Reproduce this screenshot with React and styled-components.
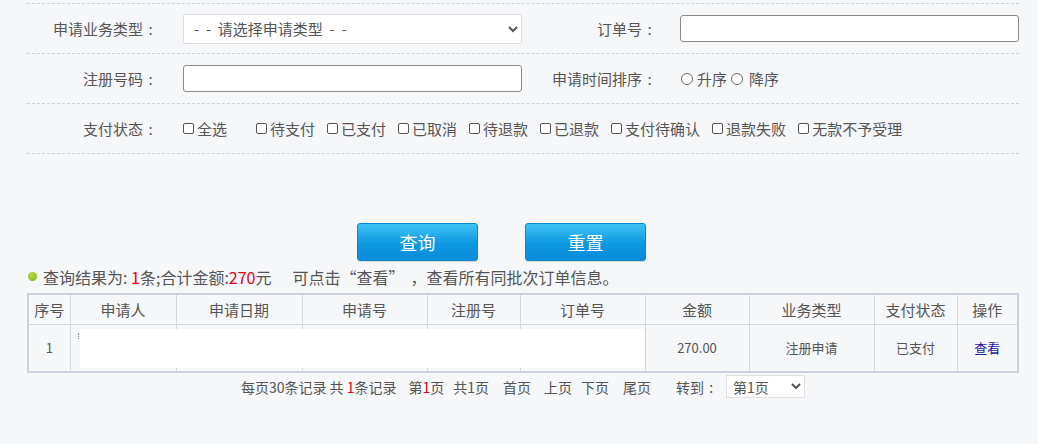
import React from "react";
import styled, { createGlobalStyle } from "styled-components";

const Global = createGlobalStyle`
  html, body { margin: 0; padding: 0; background: #f6f7f9; }
  body { font-family: "Noto Sans CJK SC", "Noto Sans", sans-serif; color: #555; }
  * { box-sizing: border-box; }
`;

const Page = styled.div`
  width: 1038px;
  padding: 3px 19px 0 27px;
`;

const Form = styled.div`
  border-top: 1px dashed #cfd1d6;
`;

const Row = styled.div`
  display: grid;
  grid-template-columns: 156px 339px 158px 339px;
  height: 50px;
  align-items: center;
  border-bottom: 1px dashed #cfd1d6;
`;

const Label = styled.div`
  text-align: right;
  padding-right: ${(p) => p.$pr || 25}px;
  font-size: 15px;
  color: #555;
  white-space: nowrap;
`;

const Colon = styled.span`
  display: inline-block;
  width: 1em;
  text-align: center;
`;

const Select = styled.select`
  width: 339px;
  height: 30px;
  border: 1px solid #dcdde2;
  border-radius: 2px;
  background: #fff;
  color: #555;
  font-family: inherit;
  font-size: 15px;
  padding: 0 6px;
  outline: none;
`;

const TextInput = styled.input`
  width: 339px;
  height: 27px;
  border: 1px solid #8a8a8a;
  border-radius: 3px;
  background: #fff;
  outline: none;
`;

const Options = styled.div`
  display: flex;
  align-items: center;
  grid-column: ${(p) => p.$span || "auto"};
  font-size: 15px;
  color: #555;
  white-space: nowrap;
`;

const Check = styled.label`
  display: inline-flex;
  align-items: center;
  margin-right: ${(p) => p.$mr ?? 12}px;
`;

const Box = styled.input`
  appearance: none;
  -webkit-appearance: none;
  width: 11px;
  height: 11px;
  margin: 0 3px 0 0;
  border: 1px solid #555;
  border-radius: 2px;
  background: #fff;
`;

const Radio = styled.input`
  appearance: none;
  -webkit-appearance: none;
  width: 12px;
  height: 12px;
  margin: 0 ${(p) => p.$gap || 5}px 0 1px;
  border: 1px solid #666;
  border-radius: 50%;
  background: #fff;
`;

const Buttons = styled.div`
  display: flex;
  justify-content: center;
  gap: 47px;
  margin-top: 69px;
  padding-right: 43px;
`;

const Btn = styled.button`
  width: 121px;
  height: 38px;
  border: 1px solid #0b86cf;
  border-radius: 3px;
  background: linear-gradient(#3ec3f6, #0e98e2 55%, #0a8cd9);
  color: #fff;
  font-family: inherit;
  font-size: 18px;
  box-shadow: 0 1px 1px rgba(0, 0, 0, 0.15);
  padding: 0;
`;

const Result = styled.div`
  display: flex;
  align-items: center;
  margin-top: 5px;
  height: 21px;
  font-size: 16px;
  color: #555;
  white-space: pre;
`;

const Gap = styled.span`
  display: inline-block;
  width: ${(p) => p.$w}px;
`;

const Dot = styled.span`
  width: 9px;
  height: 9px;
  border-radius: 50%;
  background: radial-gradient(circle at 35% 35%, #b5dc45, #7fb415);
  margin: 0 6px 0 1px;
`;

const Red = styled.span`
  color: #e60012;
`;

const TableWrap = styled.div`
  position: relative;
  margin-top: 6px;
  border: 2px solid #cdd0da;
`;

const Table = styled.table`
  width: 100%;
  border-collapse: collapse;
  table-layout: fixed;
  font-size: 14px;
  color: #555;
  th, td {
    border: 1px solid #d5d7df;
    text-align: center;
    padding: 0;
  }
  th { height: 29px; font-weight: normal; font-size: 15px; border-top: none; }
  td { height: 47px; font-size: 13px; border-bottom: none; }
  th:first-child, td:first-child { border-left: none; }
  th:last-child, td:last-child { border-right: none; }
`;

const Mask = styled.div`
  position: absolute;
  left: 51px;
  top: 34px;
  width: 564px;
  height: 39px;
  background: #fff;
`;

const Mark = styled.div`
  position: absolute;
  left: 49px;
  top: 38px;
  width: 1px;
  height: 6px;
  border-left: 1px dotted #888;
`;

const Link = styled.a`
  color: #1c1ca8;
  text-decoration: none;
  font-size: 13px;
`;

const Pager = styled.div`
  display: flex;
  justify-content: center;
  align-items: center;
  height: 23px;
  margin-top: 2px;
  font-size: 14px;
  color: #555;
  white-space: pre;
`;

const PItem = styled.span`
  margin-left: ${(p) => p.$ml || 0}px;
`;

const PageSelect = styled.select`
  width: 79px;
  height: 23px;
  margin-left: 8px;
  border: 1px solid #e0e1e5;
  background: #fff;
  color: #555;
  font-family: inherit;
  font-size: 14px;
  padding: 0 2px;
  outline: none;
`;

const cols = [41, 106, 126, 125, 93, 125, 104, 125, 83, 60];
const heads = ["序号", "申请人", "申请日期", "申请号", "注册号", "订单号", "金额", "业务类型", "支付状态", "操作"];
const checks = ["待支付", "已支付", "已取消", "待退款", "已退款", "支付待确认", "退款失败", "无款不予受理"];
const NB = "\u00a0\u00a0";

export default function App() {
  return (
    <Page>
      <Global />
      <Form>
        <Row>
          <Label>
            申请业务类型<Colon>:</Colon>
          </Label>
          <Select defaultValue="">
            <option value="">{`-${NB}-${NB}请选择申请类型${NB}-${NB}-`}</option>
          </Select>
          <Label $pr={23}>
            订单号<Colon>:</Colon>
          </Label>
          <TextInput />
        </Row>
        <Row>
          <Label>
            注册号码<Colon>:</Colon>
          </Label>
          <TextInput />
          <Label $pr={23}>
            申请时间排序<Colon>:</Colon>
          </Label>
          <Options>
            <Check $mr={3}>
              <Radio type="radio" name="sort" $gap={4} />
              升序
            </Check>
            <Check $mr={0}>
              <Radio type="radio" name="sort" $gap={6} />
              降序
            </Check>
          </Options>
        </Row>
        <Row>
          <Label>
            支付状态<Colon>:</Colon>
          </Label>
          <Options $span="2 / 5">
            <Check $mr={29}>
              <Box type="checkbox" />
              全选
            </Check>
            {checks.map((c) => (
              <Check key={c}>
                <Box type="checkbox" />
                {c}
              </Check>
            ))}
          </Options>
        </Row>
      </Form>

      <Buttons>
        <Btn>查询</Btn>
        <Btn>重置</Btn>
      </Buttons>

      <Result>
        <Dot />
        查询结果为: <Red>1</Red>条;合计金额:<Red>270</Red>元<Gap $w={21} />可点击“查看”<Gap $w={6} />，查看所有同批次订单信息。
      </Result>

      <TableWrap>
        <Table>
          <colgroup>
            {cols.map((w, i) => (
              <col key={i} style={{ width: w }} />
            ))}
          </colgroup>
          <thead>
            <tr>
              {heads.map((h) => (
                <th key={h}>{h}</th>
              ))}
            </tr>
          </thead>
          <tbody>
            <tr>
              <td>1</td>
              <td></td>
              <td></td>
              <td></td>
              <td></td>
              <td></td>
              <td>270.00</td>
              <td>注册申请</td>
              <td>已支付</td>
              <td>
                <Link href="#">查看</Link>
              </td>
            </tr>
          </tbody>
        </Table>
        <Mark />
        <Mask />
      </TableWrap>

      <Pager>
        <PItem>每页30条记录 共 <Red>1</Red>条记录</PItem>
        <PItem $ml={12}>第<Red>1</Red>页</PItem>
        <PItem $ml={9}>共1页</PItem>
        <PItem $ml={14}>首页</PItem>
        <PItem $ml={13}>上页</PItem>
        <PItem $ml={9}>下页</PItem>
        <PItem $ml={14}>尾页</PItem>
        <PItem $ml={25}>
          转到<Colon>:</Colon>
        </PItem>
        <PageSelect defaultValue="1">
          <option value="1">第1页</option>
        </PageSelect>
      </Pager>
    </Page>
  );
}
